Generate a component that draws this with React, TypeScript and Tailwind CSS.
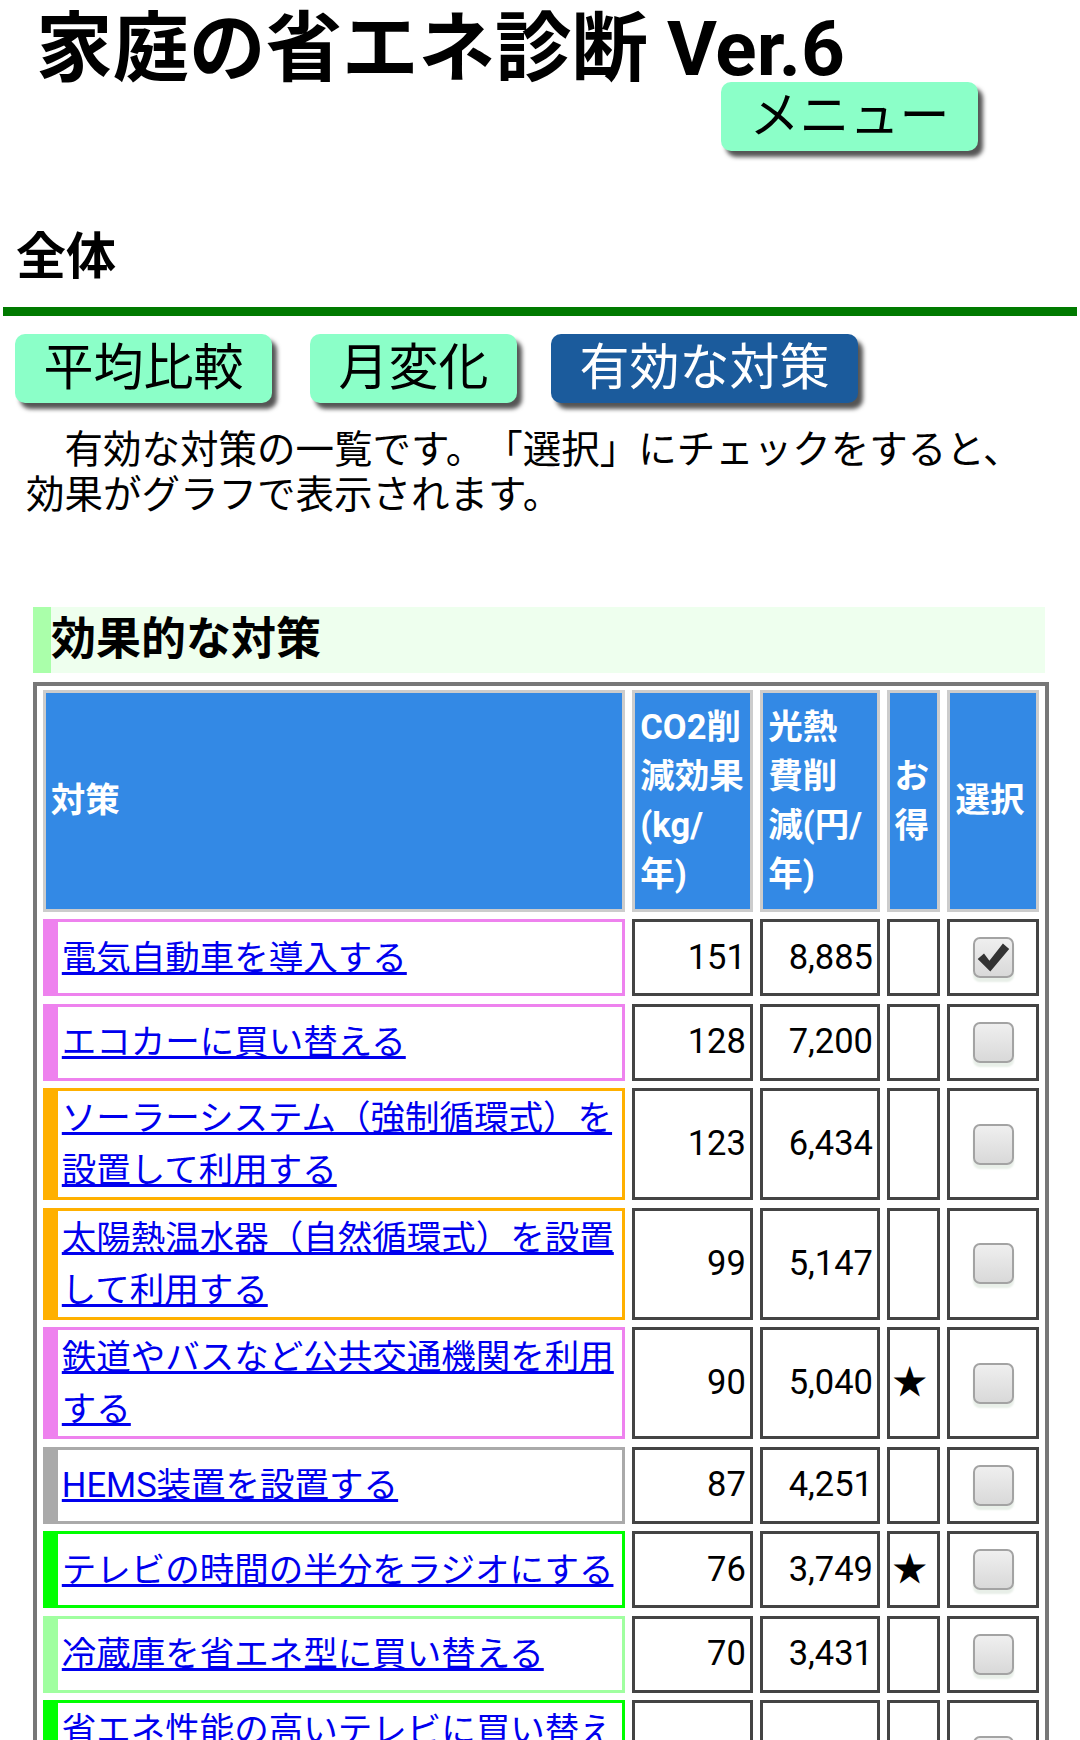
import React from "react";

type Row = {
  title: string;
  border: string;
  co2: string;
  cost: string;
  star?: boolean;
  checked?: boolean;
};

const rows: Row[] = [
  { title: "電気自動車を導入する", border: "border-[#ee82ee]", co2: "151", cost: "8,885", checked: true },
  { title: "エコカーに買い替える", border: "border-[#ee82ee]", co2: "128", cost: "7,200" },
  { title: "ソーラーシステム（強制循環式）を設置して利用する", border: "border-[#ffb000]", co2: "123", cost: "6,434" },
  { title: "太陽熱温水器（自然循環式）を設置して利用する", border: "border-[#ffb000]", co2: "99", cost: "5,147" },
  { title: "鉄道やバスなど公共交通機関を利用する", border: "border-[#ee82ee]", co2: "90", cost: "5,040", star: true },
  { title: "HEMS装置を設置する", border: "border-[#aaaaaa]", co2: "87", cost: "4,251" },
  { title: "テレビの時間の半分をラジオにする", border: "border-[#00ff00]", co2: "76", cost: "3,749", star: true },
  { title: "冷蔵庫を省エネ型に買い替える", border: "border-[#a0ffa0]", co2: "70", cost: "3,431" },
  { title: "省エネ性能の高いテレビに買い替える", border: "border-[#00ff00]", co2: "65", cost: "3,190" },
];

function CheckBox({ checked }: { checked?: boolean }) {
  return (
    <div className="w-[41px] h-[41px] rounded-[7px] border-[2.5px] border-[#a3a3a3] bg-gradient-to-b from-[#efefef] to-[#d9d9d9] shadow-[0_4px_2px_#e8efe8] flex items-center justify-center">
      {checked && (
        <svg width="36" height="36" viewBox="0 0 40 40">
          <polygon points="3,21 10,15 16,23 31,4 38,10 17,35" fill="#333333" />
        </svg>
      )}
    </div>
  );
}

function TabButton({ label, active, className }: { label: string; active?: boolean; className?: string }) {
  return (
    <button
      className={
        "h-[69px] px-[28.5px] rounded-[10px] text-[50px] leading-none whitespace-nowrap shadow-[5px_6px_4px_#555555] " +
        (active ? "bg-[#1b5b9c] text-white " : "bg-[#8bffc8] text-black ") +
        (className ?? "")
      }
    >
      {label}
    </button>
  );
}

export default function App() {
  return (
    <div className="w-[1080px] min-h-[1740px] bg-white text-black [text-spacing-trim:space-all] font-[Roboto,'Noto_Sans_CJK_JP',sans-serif]">
      <h1 className="pl-[36px] pt-[10.5px] text-[76.5px] leading-[77px] font-bold whitespace-nowrap">
        家庭の省エネ診断 Ver.6
      </h1>

      <div className="flex justify-end pr-[102px] mt-[-6px]">
        <TabButton label="メニュー" />
      </div>

      <h2 className="mt-[81px] pl-[16px] text-[50px] leading-[50px] font-bold">全体</h2>

      <div className="mt-[25px] mx-[3px] h-[9px] bg-[#007a00]" />

      <div className="flex mt-[18px] pl-[15px]">
        <TabButton label="平均比較" className="mr-[38px]" />
        <TabButton label="月変化" className="mr-[34px]" />
        <TabButton label="有効な対策" active />
      </div>

      <p className="mt-[24.5px] pl-[26px] w-[1036px] text-[38.5px] leading-[45px]">
        {"\u3000有効な対策の一覧です。「選択」にチェックをすると、効果がグラフで表示されます。"}
      </p>

      <div className="mt-[89.5px] ml-[33px] w-[1012px] h-[66px] border-l-[18px] border-[#aaffaa] bg-[#eeffee] text-[45px] leading-[66px] font-bold">
        効果的な対策
      </div>

      <div className="mt-[9px] ml-[33px] w-[1016px] border-[4px] border-[#777777] px-[5.8px] pt-[4px] pb-[6px]">
        <div className="grid grid-cols-[582px_120.5px_119.7px_52.5px_91.8px] gap-x-[7.5px] gap-y-[7.5px]">
          <div className="bg-[#3389e5] border-[3px] border-[#cccccc] text-white font-bold text-[34.5px] leading-[49px] px-[5px] flex items-center">
            対策
          </div>
          <div className="bg-[#3389e5] border-[3px] border-[#cccccc] text-white font-bold text-[34.5px] leading-[49px] px-[5px] py-[10px] whitespace-nowrap">
            CO2削<br />減効果<br />(kg/<br />年)
          </div>
          <div className="bg-[#3389e5] border-[3px] border-[#cccccc] text-white font-bold text-[34.5px] leading-[49px] px-[5px] py-[10px] whitespace-nowrap">
            光熱<br />費削<br />減(円/<br />年)
          </div>
          <div className="bg-[#3389e5] border-[3px] border-[#cccccc] text-white font-bold text-[34.5px] leading-[49px] px-[4px] flex items-center whitespace-nowrap">
            <span>お<br />得</span>
          </div>
          <div className="bg-[#3389e5] border-[3px] border-[#cccccc] text-white font-bold text-[34.5px] leading-[49px] px-[5px] flex items-center whitespace-nowrap">
            選択
          </div>

          {rows.map((r) => (
            <React.Fragment key={r.title}>
              <div
                className={
                  "border-t-[3px] border-r-[3px] border-b-[3px] border-l-[15px] pl-[4px] pr-[2px] py-[1px] flex items-center text-[34.5px] leading-[52px] " +
                  r.border
                }
              >
                <a href="#" className="text-[#0000ee] underline">
                  {r.title}
                </a>
              </div>
              <div className="border-[3px] border-[#444444] flex items-center justify-end pr-[4px] text-[34.5px]">
                {r.co2}
              </div>
              <div className="border-[3px] border-[#444444] flex items-center justify-end pr-[4px] text-[34.5px]">
                {r.cost}
              </div>
              <div className="border-[3px] border-[#444444] flex items-center pl-[2px] text-[34.5px]">
                {r.star ? "★" : ""}
              </div>
              <div className="border-[3px] border-[#444444] flex items-center justify-center py-[15px]">
                <CheckBox checked={r.checked} />
              </div>
            </React.Fragment>
          ))}
        </div>
      </div>
    </div>
  );
}
